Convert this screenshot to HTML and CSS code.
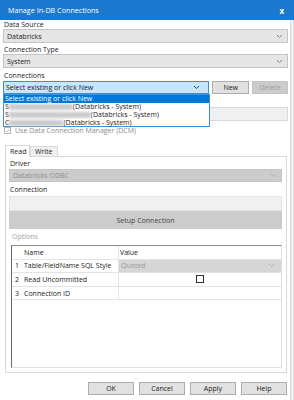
FILE: index.html
```html
<!DOCTYPE html>
<html lang="en">
<head>
    <meta charset="UTF-8">
    <title>Manage In-DB Connections</title>
    <link rel="stylesheet" href="styles.css">
</head>
<body>
    <div class="window">
        <div class="titlebar">
            <span>Manage In-DB Connections</span>
            <span class="close">x</span>
        </div>

        <div class="frame">
            <div class="dialog">
                <div class="label first">Data Source</div>
                <div class="select">
                    <span>Databricks</span>
                    <svg class="chev" width="7" height="5" viewBox="0 0 7 5"><polyline points="1,1 3.5,3.5 6,1" /></svg>
                </div>

                <div class="label">Connection Type</div>
                <div class="select">
                    <span>System</span>
                    <svg class="chev" width="7" height="5" viewBox="0 0 7 5"><polyline points="1,1 3.5,3.5 6,1" /></svg>
                </div>

                <div class="label">Connections</div>
                <div class="combo-row">
                    <div class="combo">
                        <span>Select existing or click New</span>
                        <svg class="chev dark" width="7" height="5" viewBox="0 0 7 5"><polyline points="1,1 3.5,3.5 6,1" /></svg>

                        <!-- open dropdown list -->
                        <div class="list">
                            <div class="item active">Select existing or click New</div>
                            <div class="item">S<span class="blur" style="width: 64px"></span>(Databricks - System)</div>
                            <div class="item">S<span class="blur" style="width: 82px"></span>(Databricks - System)</div>
                            <div class="item">C<span class="blur" style="width: 54px"></span>(Databricks - System)</div>
                        </div>
                    </div>
                    <button class="btn new">New</button>
                    <button class="btn delete" disabled>Delete</button>
                </div>

                <div class="conn-text"></div>

                <div class="check-row">
                    <span class="checkbox checked">
                        <svg width="7" height="7" viewBox="0 0 7 7"><polyline points="1,3.5 3,5.5 6,1.5" /></svg>
                    </span>
                    <span>Use Data Connection Manager (DCM)</span>
                </div>

                <div class="tabs">
                    <div class="tab selected">Read</div>
                    <div class="tab">Write</div>
                </div>

                <div class="panel">
                    <div class="plabel">Driver</div>
                    <div class="select disabled">
                        <span>Databricks ODBC</span>
                        <svg class="chev light" width="7" height="5" viewBox="0 0 7 5"><polyline points="1,1 3.5,3.5 6,1" /></svg>
                    </div>

                    <div class="plabel">Connection</div>
                    <div class="conn-field"></div>
                    <div class="setup-btn">Setup Connection</div>

                    <div class="options-label">Options</div>
                    <div class="grid">
                        <div class="grid-row head">
                            <div class="num"></div>
                            <div class="name">Name</div>
                            <div class="value">Value</div>
                        </div>
                        <div class="grid-row">
                            <div class="num">1</div>
                            <div class="name">Table/FieldName SQL Style</div>
                            <div class="value quoted">
                                <span>Quoted</span>
                                <svg class="chev light" width="7" height="5" viewBox="0 0 7 5"><polyline points="1,1 3.5,3.5 6,1" /></svg>
                            </div>
                        </div>
                        <div class="grid-row">
                            <div class="num">2</div>
                            <div class="name">Read Uncommitted</div>
                            <div class="value center"><span class="checkbox plain"></span></div>
                        </div>
                        <div class="grid-row">
                            <div class="num">3</div>
                            <div class="name">Connection ID</div>
                            <div class="value"></div>
                        </div>
                    </div>
                </div>

                <div class="actions">
                    <button class="btn action">OK</button>
                    <button class="btn action">Cancel</button>
                    <button class="btn action">Apply</button>
                    <button class="btn action">Help</button>
                </div>
            </div>
            <div class="edge"></div>
        </div>
    </div>
</body>
</html>
```

FILE: styles.css
```css
* {
    margin: 0;
    padding: 0;
    box-sizing: border-box;
}

body {
    width: 294px;
    height: 400px;
    overflow: hidden;
    font-family: 'Open Sans', 'Noto Sans', sans-serif;
    font-size: 7px;
    color: #1a1a1a;
    background: #fff;
}

.window {
    display: flex;
    flex-direction: column;
    height: 400px;
}

.titlebar {
    height: 20px;
    background: #1a78cf;
    color: #fff;
    display: flex;
    align-items: center;
    justify-content: space-between;
    padding: 0 10px 0 8px;
    font-size: 7.2px;
}

.close {
    font-weight: bold;
    font-size: 8px;
}

.frame {
    flex: 1;
    display: flex;
}

.dialog {
    width: 291px;
    padding: 0 2px 0 3px;
    border-right: 1px solid #d6d6d6;
    display: flex;
    flex-direction: column;
}

.edge {
    flex: 1;
    background: #f2f2f2;
    border-right: 1px solid #e0e0e0;
}

.label {
    height: 11px;
    padding-top: 2px;
    line-height: 9px;
    padding-left: 1px;
}

.label.first {
    height: 9px;
    padding-top: 0;
}

.label:nth-of-type(5) {
    height: 13px;
    padding-top: 3px;
}

.select {
    height: 14px;
    background: #e5e5e5;
    border: 1px solid #c4c4c4;
    display: flex;
    align-items: center;
    justify-content: space-between;
    padding: 0 4px 0 3px;
}

.select + .label {
    margin-top: 0;
}

.chev {
    fill: none;
    stroke: #777;
    stroke-width: 0.9;
}

.chev.dark {
    stroke: #333;
}

.chev.light {
    stroke: #aaa;
}

.combo-row {
    height: 13px;
    display: flex;
    gap: 3px;
}

.combo {
    position: relative;
    width: 207px;
    background: #cce4f7;
    border: 1px solid #3c8fd8;
    display: flex;
    align-items: center;
    justify-content: space-between;
    padding: 0 8px 0 2px;
}

.list {
    position: absolute;
    top: 12px;
    left: -1px;
    width: 207px;
    height: 33px;
    background: #fff;
    border: 1px solid #3c8fd8;
    z-index: 2;
}

.item {
    height: 8px;
    line-height: 8px;
    padding-left: 1px;
    white-space: nowrap;
    overflow: hidden;
    display: flex;
    align-items: center;
}

.item.active {
    background: #0078d7;
    color: #fff;
}

.blur {
    display: inline-block;
    height: 6px;
    background: #c9c9c9;
    filter: blur(1.5px);
}

.btn {
    font-family: inherit;
    font-size: 7px;
    color: #1a1a1a;
    background: #e1e1e1;
    border: 1px solid #adadad;
}

.btn.new {
    width: 37px;
}

.btn.delete {
    width: 36px;
    background: #cccccc;
    border-color: #c4c4c4;
    color: #9a9a9a;
}

.conn-text {
    height: 14px;
    margin-top: 13px;
    background: #f0f0f0;
    border: 1px solid #d9d9d9;
}

.check-row {
    display: flex;
    align-items: center;
    gap: 4px;
    height: 11px;
    margin-top: 4px;
    padding-left: 1px;
    color: #8a8a8a;
}

.checkbox {
    width: 7px;
    height: 7px;
    border: 1px solid #b5b5b5;
    display: inline-flex;
    align-items: center;
    justify-content: center;
    background: #fff;
}

.checkbox svg {
    fill: none;
    stroke: #a0a0a0;
    stroke-width: 1;
}

.checkbox.plain {
    width: 8px;
    height: 8px;
    border-color: #333;
}

.tabs {
    display: flex;
    margin-top: 8px;
    margin-left: 2px;
    height: 12px;
    align-items: flex-end;
}

.tab {
    height: 10px;
    line-height: 9px;
    padding: 0 4px;
    background: #f0f0f0;
    border: 1px solid #d9d9d9;
    border-bottom: none;
}

.tab.selected {
    height: 12px;
    line-height: 11px;
    width: 25px;
    background: #fff;
    margin-bottom: -1px;
    position: relative;
    z-index: 1;
}

.panel {
    height: 217px;
    margin: 0 1px 0 2px;
    border: 1px solid #d9d9d9;
    padding: 2px 4px 0 3px;
    display: flex;
    flex-direction: column;
}

.plabel {
    height: 9px;
    line-height: 9px;
    padding-left: 1px;
}

.plabel + .select {
    margin-top: 1px;
}

.select.disabled {
    height: 13px;
    background: #cccccc;
    border-color: #c4c4c4;
    color: #8c8c8c;
    margin-bottom: 3px;
}

.select.disabled + .plabel {
    margin-top: 0;
}

.conn-field {
    height: 15px;
    margin-top: 2px;
    background: #f0f0f0;
    border: 1px solid #e3e3e3;
}

.setup-btn {
    height: 18px;
    background: #cccccc;
    display: flex;
    align-items: center;
    justify-content: center;
    color: #444;
}

.options-label {
    height: 16px;
    line-height: 16px;
    padding-left: 3px;
    color: #a0a0a0;
}

.grid {
    height: 123px;
    margin-left: 2px;
    border-top: 1px solid #8a8a8a;
    border-left: 1px solid #6a6a6a;
    border-right: 1px solid #e0e0e0;
    border-bottom: 1px solid #e0e0e0;
}

.grid-row {
    display: flex;
    height: 13.6px;
    border-bottom: 1px solid #e3e3e3;
    align-items: stretch;
}

.grid-row > div {
    display: flex;
    align-items: center;
}

.num {
    width: 10px;
    padding-left: 3px;
}

.name {
    width: 97px;
    padding-left: 2px;
    border-right: 1px solid #e3e3e3;
}

.value {
    flex: 1;
    padding-left: 2px;
}

.head .value {
    padding-left: 1px;
}

.value.quoted {
    background: #d6d6d6;
    color: #9a9a9a;
    justify-content: space-between;
    padding-right: 6px;
}

.value.center {
    justify-content: center;
    padding-left: 0;
    padding-right: 1px;
}

.actions {
    display: flex;
    justify-content: flex-end;
    gap: 5px;
    margin-top: 9px;
    padding-right: 1px;
}

.btn.action {
    width: 46px;
    height: 13px;
}
```
